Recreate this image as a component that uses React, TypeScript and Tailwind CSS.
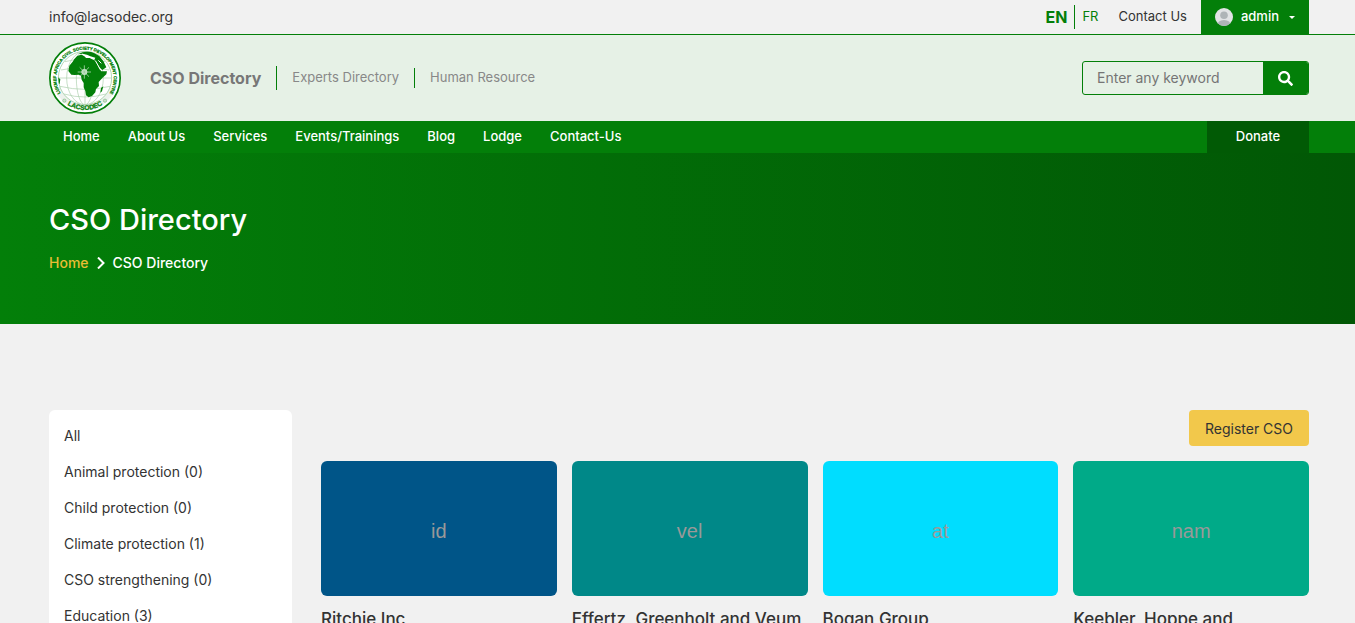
import { FaSearch } from "react-icons/fa";

const GREEN = "#037f09";

const navLinks = ["Home", "About Us", "Services", "Events/Trainings", "Blog", "Lodge", "Contact-Us"];

const categories = [
  "All",
  "Animal protection (0)",
  "Child protection (0)",
  "Climate protection (1)",
  "CSO strengthening (0)",
  "Education (3)",
];

const organisations = [
  { name: "Ritchie Inc", label: "id", color: "bg-[#005588]" },
  { name: "Effertz, Greenholt and Veum", label: "vel", color: "bg-[#008888]" },
  { name: "Bogan Group", label: "at", color: "bg-[#00ddff]" },
  { name: "Keebler, Hoppe and", label: "nam", color: "bg-[#00aa88]" },
];

const container = "pl-[49px] pr-[46px]";

function Logo() {
  return (
    <svg viewBox="0 0 216 216" className="size-[72px]" role="img" aria-label="LACSODEC">
      <defs>
        <path id="ring-top" d="M36 156 A86 86 0 1 1 180 156" />
        <path id="ring-bottom" d="M36 172 A97 97 0 0 0 180 172" />
        <clipPath id="globe">
          <circle cx="108" cy="108" r="80" />
        </clipPath>
      </defs>
      <circle cx="108" cy="108" r="105.5" fill="#fff" stroke={GREEN} strokeWidth="5" />
      <path d="M17 140 A97 97 0 0 0 199 140 L181 134 A78 78 0 0 1 35 134 Z" fill="#edf2ed" />
      <circle cx="108" cy="108" r="80" fill="#fff" stroke="#8fc492" strokeWidth="2" />
      <g clipPath="url(#globe)">
        <g fill="none" stroke="#a9cfab" strokeWidth="2">
          <ellipse cx="108" cy="108" rx="26" ry="80" />
          <ellipse cx="108" cy="108" rx="55" ry="80" />
          <path d="M108 27V189M27 108H189M36 84Q108 68 180 84M48 59Q108 43 168 59M33 133Q108 151 183 133M45 156Q108 174 171 156" />
        </g>
        <path
          fill={GREEN}
          d="M85 41 L97 38 L107 42 L111 48 L122 48 L132 53 L140 56 L145 67 L151 80 L157 88 L174 88 L172 97 L160 108 L149 120 L150 132 L141 141 L139 151 L130 161 L119 166 L111 160 L109 147 L104 136 L104 123 L98 113 L96 102 L89 98 L77 99 L67 98 L58 87 L61 71 L71 59 L76 51 Z"
        />
        <path fill={GREEN} d="M86 37 Q106 25 130 30 L151 42 L163 57 L172 76 L160 84 L150 75 L142 59 L131 47 L116 44 L102 35 Z" />
        <path fill="#fff" d="M99 35 L114 38 L124 43 L139 47 L136 53 L124 48 L112 47 L104 41 Z" />
        <path fill="none" stroke="#fff" strokeWidth="3" d="M139 56 L155 84 M148 55 L157 64" />
        <path fill={GREEN} d="M26 105 L34 112 L32 125 L26 128 Z M156 138 L163 133 L159 148 L154 152 Z" />
      </g>
      <g stroke="#d7ead8" strokeWidth="2">
        <path d="M106 70V110M86 90H126M92 76L120 104M120 76L92 104" />
        <circle cx="106" cy="90" r="8" fill="#b8dcba" />
        <circle cx="106" cy="90" r="2" fill={GREEN} />
      </g>
      <g fill="#c5ddc6" stroke={GREEN} strokeWidth="1" opacity="0.8">
        <circle cx="46" cy="176" r="5" />
        <circle cx="168" cy="176" r="5" />
      </g>
      <g fill={GREEN} stroke={GREEN} strokeWidth="0.8" className="font-['Liberation_Sans',sans-serif] font-bold">
        <text fontSize="13">
          <textPath href="#ring-top" startOffset="50%" textAnchor="middle">
            LUKMEF AFRICA CIVIL SOCIETY DEVELOPMENT CENTRE
          </textPath>
        </text>
        <text fontSize="20">
          <textPath href="#ring-bottom" startOffset="50%" textAnchor="middle">
            LACSODEC
          </textPath>
        </text>
      </g>
    </svg>
  );
}

function Avatar() {
  return (
    <svg viewBox="0 0 18 18" className="size-[18px]" aria-hidden="true">
      <clipPath id="avatar-clip">
        <circle cx="9" cy="9" r="9" />
      </clipPath>
      <g clipPath="url(#avatar-clip)">
        <rect width="18" height="18" fill="#e1e3e5" />
        <circle cx="9" cy="7.3" r="3.8" fill="#aeb4b7" />
        <path d="M2 18 Q2.5 12 9 12 Q15.500 12 16 18Z" fill="#aeb4b7" />
      </g>
    </svg>
  );
}

export default function App() {
  return (
    <div className="min-h-screen bg-[#f1f1f1] font-['Inter',sans-serif] text-[#333]">
      <div className="border-b border-[#037f09]">
        <div className={`${container} flex h-[34px] items-center justify-between`}>
          <a href="mailto:info@lacsodec.org" className="text-sm">
            info@lacsodec.org
          </a>
          <div className="flex h-full items-center">
            <a href="#en" className="text-base leading-5 font-bold text-[#037f09]">
              EN
            </a>
            <span className="mx-[7px] h-6 w-px bg-[#037f09]" />
            <a href="#fr" className="text-[13px] text-[#037f09]">
              FR
            </a>
            <a href="#contact" className="mr-3.5 ml-5 text-[13px]">
              Contact Us
            </a>
            <button type="button" className="flex h-full items-center bg-[#037f09] px-3.5 text-[13px] font-medium text-white">
              <Avatar />
              <span className="ml-2">admin</span>
              <svg viewBox="0 0 6 3" className="ml-2.5 h-[3px] w-1.5" aria-hidden="true">
                <path d="M0 0H6L3 3Z" fill="#fff" />
              </svg>
            </button>
          </div>
        </div>
      </div>

      <header className="bg-[#e6f1e6]">
        <div className={`${container} flex h-[86px] items-center`}>
          <a href="#home">
            <Logo />
          </a>
          <nav className="ml-[29px] flex items-center text-[13px] text-[#888]" aria-label="Directories">
            <a href="#cso" className="text-base font-bold text-[#777]">
              CSO Directory
            </a>
            <span className="mx-[15px] h-6 w-px bg-[#037f09]" />
            <a href="#experts">Experts Directory</a>
            <span className="mx-[15px] h-5 w-px bg-[#037f09]" />
            <a href="#human">Human Resource</a>
          </nav>
          <form className="ml-auto flex h-[34px] w-[227px] overflow-hidden rounded-[3px] border border-[#037f09]">
            <input
              type="search"
              aria-label="Keyword"
              placeholder="Enter any keyword"
              className="min-w-0 flex-1 bg-transparent px-3.5 text-sm outline-none placeholder:text-[#757575]"
            />
            <button type="button" aria-label="Search" className="flex w-[45px] items-center justify-center bg-[#037f09] text-white">
              <FaSearch size={15} />
            </button>
          </form>
        </div>
      </header>

      <div className="bg-[#037f09] text-[13px] font-medium text-white">
        <div className={`${container} flex h-8 items-stretch justify-between`}>
          <nav className="flex items-center gap-7 pl-3.5" aria-label="Main">
            {navLinks.map((item) => (
              <a key={item} href={`#${item}`}>
                {item}
              </a>
            ))}
          </nav>
          <a href="#donate" className="flex w-[102px] items-center justify-center bg-[#015a05]">
            Donate
          </a>
        </div>
      </div>

      <section className="bg-linear-to-r from-[#037f09] to-[#015705] text-white">
        <div className={`${container} h-[171px] pt-[49px]`}>
          <h1 className="text-[29px] leading-9 font-medium">CSO Directory</h1>
          <div className="mt-[15px] flex items-center text-sm font-medium">
            <a href="#home" className="text-[#e9bd35]">
              Home
            </a>
            <svg viewBox="0 0 8 12" className="mx-2 h-3 w-2" aria-hidden="true">
              <path d="M1 0.500L6.500 6L1 11.500" fill="none" stroke="#fff" strokeWidth="2" />
            </svg>
            <span>CSO Directory</span>
          </div>
        </div>
      </section>

      <main className={`${container} flex items-start gap-[29px] pt-[86px]`}>
        <aside className="w-[243px] shrink-0 rounded-md bg-white px-[15px] py-2">
          <ul className="text-sm">
            {categories.map((item) => (
              <li key={item}>
                <a href="#category" className="block leading-9">
                  {item}
                </a>
              </li>
            ))}
          </ul>
        </aside>
        <div className="flex-1">
          <div className="flex justify-end">
            <button type="button" className="h-9 rounded-[4px] bg-[#f2c84b] px-4 pt-px text-sm">
              Register CSO
            </button>
          </div>
          <div className="mt-[15px] grid grid-cols-4 gap-[15px]">
            {organisations.map((org) => (
              <article key={org.name}>
                <div
                  className={`${org.color} flex h-[135px] items-center justify-center rounded-md pt-1 font-['Liberation_Sans',sans-serif] text-xl text-[#999]`}
                >
                  {org.label}
                </div>
                <h2 className="mt-[11px] text-[17px] leading-6 font-medium">{org.name}</h2>
              </article>
            ))}
          </div>
        </div>
      </main>
    </div>
  );
}
